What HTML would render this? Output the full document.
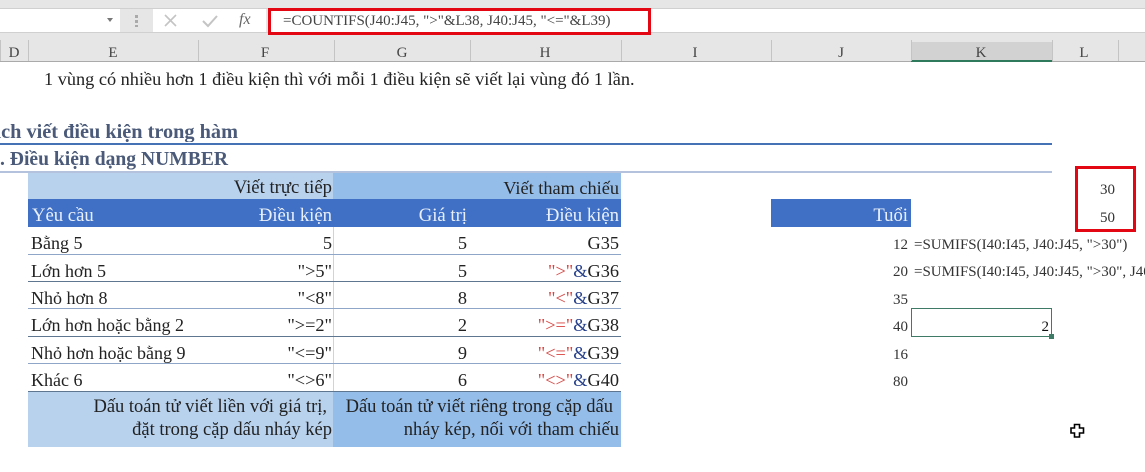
<!DOCTYPE html>
<html lang="vi"><head><meta charset="utf-8"><title>Excel</title>
<style>
html,body{margin:0;padding:0;background:#fff}
#p{position:relative;width:1145px;height:472px;overflow:hidden;background:#fff;font-family:"Liberation Serif",serif;color:#222;font-size:18.3px}
#p div{position:absolute}
.t{white-space:nowrap;line-height:20px;height:20px}
.r{text-align:right}
.w{color:#eaf0fa;font-size:18.7px}
.s{font-size:15px;color:#333}
.n{font-size:18px}
.h{font-size:15px;color:#444;top:44px;line-height:18px;white-space:nowrap;transform:translateX(-50%)}
.v{width:1px;top:40px;height:21px;background:#c4c4c4}
.l{left:28px;width:593px;height:1px;background:#8fa6c9}
.d{background:#5f7691}
.b{color:#4a5a78;font-weight:bold}
i{font-style:normal;color:#d9433f}
em{font-style:normal;color:#27408b}
</style></head><body><div id="p">
<div style="left:0;top:0;width:1145px;height:62px;background:#e6e6e6"></div>
<div style="left:0;top:8px;width:1145px;height:1px;background:#d0d0d0"></div>
<div style="left:0;top:9px;width:120px;height:23px;background:#fff"></div>
<div style="left:153px;top:9px;width:113px;height:23px;background:#fff"></div>
<div style="left:268px;top:9px;width:877px;height:23px;background:#fff"></div>
<div style="left:0;top:32px;width:1145px;height:1px;background:#d0d0d0"></div>
<svg style="position:absolute;left:0;top:0" width="270" height="34" viewBox="0 0 270 34">
<path d="M107 18l6 0-3 4z" fill="#777"/>
<g fill="#aaa"><rect x="135" y="15" width="3" height="3"/><rect x="135" y="20" width="3" height="3"/><rect x="135" y="25" width="3" height="2"/></g>
<path d="M165 15l11 11M176 15l-11 11" stroke="#c4c4c4" stroke-width="1.600" fill="none"/>
<path d="M203 21l5 5 9-10" stroke="#c4c4c4" stroke-width="2" fill="none"/>
</svg>
<div class="t" style="left:239px;top:10px;font-style:italic;font-size:16px;color:#666">fx</div>
<div style="left:268px;top:8px;width:377px;height:21px;border:3px solid #e30613"></div>
<div class="t" style="left:283px;top:11px;font-size:15px;color:#444">=COUNTIFS(J40:J45, "&gt;"&amp;L38, J40:J45, "&lt;="&amp;L39)</div>

<div style="left:0;top:61px;width:1145px;height:1px;background:#aaa"></div>
<div style="left:911px;top:42px;width:141px;height:18px;background:#d2d2d2"></div>
<div style="left:911px;top:60px;width:141px;height:2px;background:#2f7a5c"></div>
<div class="v" style="left:0"></div><div class="v" style="left:28px"></div><div class="v" style="left:198px"></div><div class="v" style="left:334px"></div><div class="v" style="left:470px"></div><div class="v" style="left:621px"></div><div class="v" style="left:771px"></div><div class="v" style="left:911px"></div><div class="v" style="left:1052px"></div><div class="v" style="left:1118px"></div>
<div class="h" style="left:14px">D</div><div class="h" style="left:113px">E</div><div class="h" style="left:265px">F</div><div class="h" style="left:402px">G</div><div class="h" style="left:545px">H</div><div class="h" style="left:695px">I</div><div class="h" style="left:841px">J</div><div class="h" style="left:981px">K</div><div class="h" style="left:1084px">L</div>

<div class="t" style="left:44px;top:69px">1 vùng có nhiều hơn 1 điều kiện thì với mỗi 1 điều kiện sẽ viết lại vùng đó 1 lần.</div>

<div class="t b" style="left:0;top:122px;font-size:20.3px;width:300px;overflow:hidden"><span style="margin-left:-9px">ách viết điều kiện trong hàm</span></div>
<div style="left:0;top:143px;width:1052px;height:2px;background:#4472b4"></div>
<div class="t b" style="left:0;top:150px;font-size:19.6px;width:300px;overflow:hidden">. Điều kiện dạng NUMBER</div>
<div style="left:0;top:171px;width:1052px;height:2px;background:#b4c2dd"></div>

<div style="left:28px;top:173px;width:305px;height:26px;background:#b8d2ee"></div>
<div style="left:333px;top:173px;width:288px;height:26px;background:#95bde9"></div>
<div style="left:28px;top:199px;width:593px;height:28px;background:#3f70c6"></div>
<div style="left:28px;top:391px;width:305px;height:56px;background:#b8d2ee"></div>
<div style="left:333px;top:391px;width:288px;height:56px;background:#95bde9"></div>
<div style="left:333px;top:227px;width:1px;height:164px;background:#c5d6ec"></div>

<div class="l" style="top:254px"></div><div class="l d" style="top:281px"></div><div class="l" style="top:308px"></div><div class="l d" style="top:336px"></div><div class="l" style="top:363px"></div><div class="l d" style="top:391px"></div>

<div class="t r" style="right:813px;top:178px;font-size:18.7px">Viết trực tiếp</div>
<div class="t r" style="right:526px;top:178px">Viết tham chiếu</div>
<div class="t w" style="left:32px;top:206px">Yêu cầu</div>
<div class="t r w" style="right:813px;top:206px">Điều kiện</div>
<div class="t r w" style="right:678px;top:206px">Giá trị</div>
<div class="t r w" style="right:526px;top:206px">Điều kiện</div>

<div class="t n" style="left:31px;top:233px">Bằng 5</div><div class="t r" style="right:813px;top:233px">5</div><div class="t r" style="right:678px;top:233px">5</div><div class="t r" style="right:526px;top:233px">G35</div>
<div class="t n" style="left:31px;top:261px">Lớn hơn 5</div><div class="t r" style="right:813px;top:261px">"&gt;5"</div><div class="t r" style="right:678px;top:261px">5</div><div class="t r" style="right:526px;top:261px"><i>"&gt;"</i><em>&amp;</em>G36</div>
<div class="t n" style="left:31px;top:288px">Nhỏ hơn 8</div><div class="t r" style="right:813px;top:288px">"&lt;8"</div><div class="t r" style="right:678px;top:288px">8</div><div class="t r" style="right:526px;top:288px"><i>"&lt;"</i><em>&amp;</em>G37</div>
<div class="t n" style="left:31px;top:315px">Lớn hơn hoặc bằng 2</div><div class="t r" style="right:813px;top:315px">"&gt;=2"</div><div class="t r" style="right:678px;top:315px">2</div><div class="t r" style="right:526px;top:315px"><i>"&gt;="</i><em>&amp;</em>G38</div>
<div class="t n" style="left:31px;top:343px">Nhỏ hơn hoặc bằng 9</div><div class="t r" style="right:813px;top:343px">"&lt;=9"</div><div class="t r" style="right:678px;top:343px">9</div><div class="t r" style="right:526px;top:343px"><i>"&lt;="</i><em>&amp;</em>G39</div>
<div class="t n" style="left:31px;top:370px">Khác 6</div><div class="t r" style="right:813px;top:370px">"&lt;&gt;6"</div><div class="t r" style="right:678px;top:370px">6</div><div class="t r" style="right:526px;top:370px"><i>"&lt;&gt;"</i><em>&amp;</em>G40</div>

<div class="t r" style="right:818px;top:397px;font-size:18.5px">Dấu toán tử viết liền với giá trị,</div>
<div class="t r" style="right:813px;top:420px;font-size:18.5px">đặt trong cặp dấu nháy kép</div>
<div class="t r" style="right:532px;top:397px;font-size:18.5px">Dấu toán tử viết riêng trong cặp dấu</div>
<div class="t r" style="right:526px;top:420px;font-size:18.5px">nháy kép, nối với tham chiếu</div>

<div style="left:771px;top:199px;width:140px;height:28px;background:#3f70c6"></div>
<div class="t r w" style="right:237px;top:206px">Tuổi</div>
<div style="left:1075px;top:166px;width:55px;height:60px;border:3px solid #e30613"></div>
<div class="t r s" style="right:30px;top:180px">30</div>
<div class="t r s" style="right:30px;top:208px">50</div>
<div class="t r s" style="right:237px;top:235px">12</div>
<div class="t r s" style="right:237px;top:262px">20</div>
<div class="t r s" style="right:237px;top:290px">35</div>
<div class="t r s" style="right:237px;top:317px">40</div>
<div class="t r s" style="right:237px;top:345px">16</div>
<div class="t r s" style="right:237px;top:372px">80</div>
<div class="t s" style="left:914px;top:235px">=SUMIFS(I40:I45, J40:J45, "&gt;30")</div>
<div class="t s" style="left:914px;top:262px">=SUMIFS(I40:I45, J40:J45, "&gt;30", J40:J45, "&lt;50")</div>
<div style="left:911px;top:308px;width:139px;height:27px;border:1.5px solid #3f7a66;background:#fff"></div>
<div class="t r s" style="right:96px;top:317px;color:#111">2</div>
<div style="left:1049px;top:334px;width:5px;height:5px;background:#3f7a66"></div>
<svg style="position:absolute;left:1070px;top:423px" width="15" height="16" viewBox="0 0 15 16"><path d="M4.500 1.500h5v3.500h4v5h-4v4h-5v-4h-3.500v-5h3.500z" fill="#fff" stroke="#000" stroke-width="1.600"/></svg>
</div></body></html>
